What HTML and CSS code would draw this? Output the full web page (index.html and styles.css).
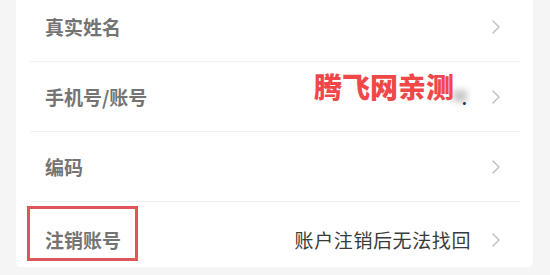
FILE: index.html
```html
<!DOCTYPE html>
<html lang="zh-CN">
<head>
<meta charset="utf-8">
<link rel="stylesheet" href="styles.css">
</head>
<body>
<div class="page">
  <div class="card">
    <div class="row">
      <span class="label">真实姓名</span>
      <span class="right">
        <svg class="chev" width="8" height="14" viewBox="0 0 8 14"><polyline points="1,1 7,7 1,13" fill="none" stroke="#c2c2c2" stroke-width="1.5" stroke-linecap="round" stroke-linejoin="round"/></svg>
      </span>
    </div>
    <div class="row row-phone">
      <span class="label">手机号/账号</span>
      <span class="right">
        <span class="masked"><span class="smudge"></span><span class="dot">.</span></span>
        <svg class="chev" width="8" height="14" viewBox="0 0 8 14"><polyline points="1,1 7,7 1,13" fill="none" stroke="#c2c2c2" stroke-width="1.5" stroke-linecap="round" stroke-linejoin="round"/></svg>
      </span>
      <span class="watermark">腾飞网亲测</span>
    </div>
    <div class="row">
      <span class="label">编码</span>
      <span class="right">
        <svg class="chev" width="8" height="14" viewBox="0 0 8 14"><polyline points="1,1 7,7 1,13" fill="none" stroke="#c2c2c2" stroke-width="1.5" stroke-linecap="round" stroke-linejoin="round"/></svg>
      </span>
    </div>
    <div class="row row-last">
      <span class="label">注销账号</span>
      <span class="right">
        <span class="value">账户注销后无法找回</span>
        <svg class="chev" width="8" height="14" viewBox="0 0 8 14"><polyline points="1,1 7,7 1,13" fill="none" stroke="#c2c2c2" stroke-width="1.5" stroke-linecap="round" stroke-linejoin="round"/></svg>
      </span>
      <span class="highlight"></span>
    </div>
  </div>
</div>
</body>
</html>
```

FILE: styles.css
```css
html, body {
  margin: 0;
  padding: 0;
  background: #f5f5f5;
  overflow: hidden;
}
body {
  font-family: "Noto Sans CJK SC", "Noto Sans", sans-serif;
}
.page {
  width: 550px;
  height: 275px;
  padding: 0 17px 0 16px;
  box-sizing: border-box;
}
.card {
  margin-top: -8px;
  background: #fff;
  border-radius: 0 0 10px 10px;
  padding: 0 13px 0 14px;
  height: 278px;
  box-sizing: border-box;
  display: flex;
  flex-direction: column;
}
.row {
  position: relative;
  height: 70px;
  box-sizing: border-box;
  border-bottom: 1px solid #f0f0f0;
  display: flex;
  align-items: center;
  justify-content: space-between;
  padding: 0 20px 0 15px;
}
.row-last {
  border-bottom: none;
  height: 68px;
  padding-top: 6px;
}
.label {
  font-size: 19px;
  font-weight: 700;
  color: #747474;
  line-height: 1;
}
.right {
  display: flex;
  align-items: center;
  gap: 21px;
}
.value {
  font-size: 19px;
  color: #3a3a3a;
  line-height: 1;
  letter-spacing: 0.6px;
}
.chev {
  display: block;
  margin-top: 1px;
}
.masked {
  position: relative;
  width: 16px;
  height: 14px;
  margin-right: 2px;
}
.smudge {
  position: absolute;
  left: 0;
  top: 0;
  width: 14px;
  height: 12px;
  background: #c8c8c8;
  filter: blur(3px);
}
.dot {
  position: absolute;
  right: 2px;
  bottom: -2px;
  font-size: 16px;
  font-weight: 700;
  color: #333;
  line-height: 1;
}
.watermark {
  position: absolute;
  left: 284px;
  top: 8px;
  font-size: 28px;
  font-weight: 900;
  color: #f04848;
  line-height: 1.2;
  letter-spacing: 0;
}
.highlight {
  position: absolute;
  left: -3px;
  top: 4px;
  width: 111px;
  height: 55px;
  box-sizing: border-box;
  border: 3px solid #e05558;
}
```
